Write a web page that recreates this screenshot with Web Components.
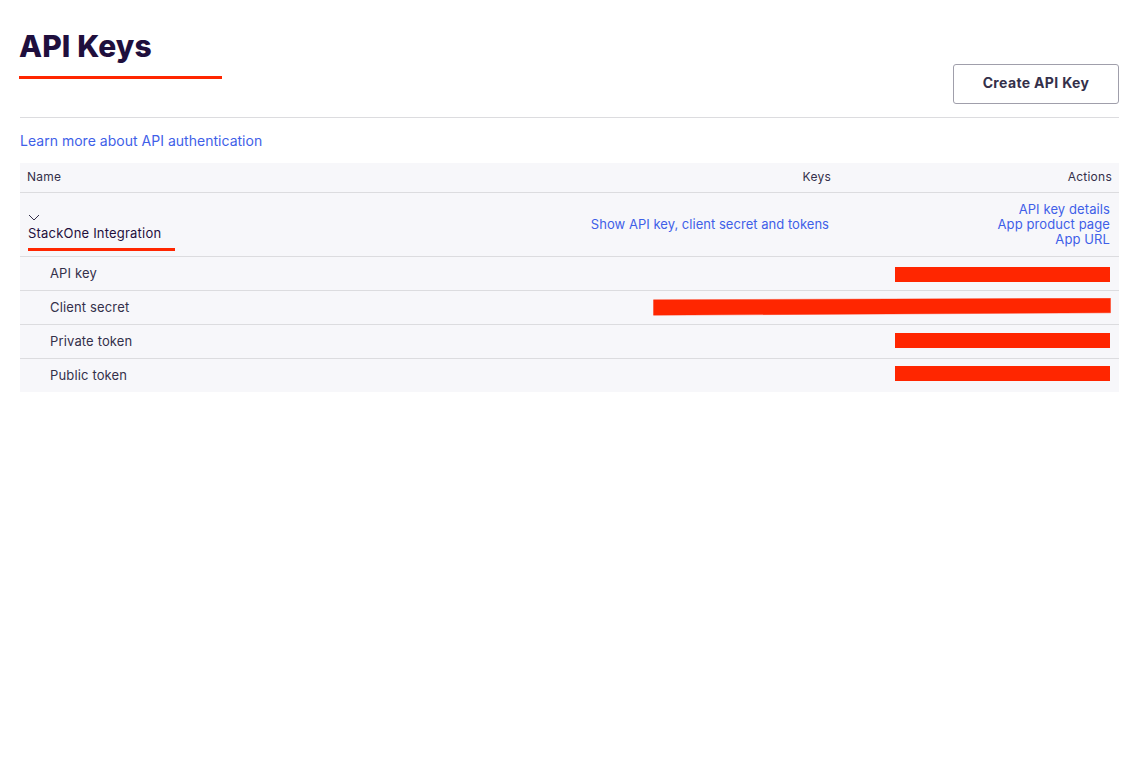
<!DOCTYPE html>
<html>
<head>
<meta charset="utf-8">
<title>API Keys</title>
<style>
  html, body { margin: 0; background: #fff; }
  body { font-family: Inter, "Liberation Sans", sans-serif; color: #1f0f3d; }
</style>
</head>
<body>
<keys-page>
  <page-header slot="header" title="API Keys" action="Create API Key"></page-header>
  <a-link slot="learn">Learn more about API authentication</a-link>
  <keys-table slot="table">
    <secret-row label="API key" nudge="2"></secret-row>
    <secret-row label="Client secret" wide></secret-row>
    <secret-row label="Private token" nudge="-2"></secret-row>
    <secret-row label="Public token" nudge="-4"></secret-row>
  </keys-table>
</keys-page>

<script>
class KeysPage extends HTMLElement {
    constructor() {
        super();
        this.attachShadow({mode: "open"}).innerHTML = `
        <style>
            :host {
                display: block;
                padding: 0 17px 0 20px;
            }
            .learn {
                --link-size: 14px;
                --link-spacing: 0.02px;
                display: block;
                padding-top: 14px;
                height: 31px;
                line-height: 17px;
            }
        </style>
        <slot name="header"></slot>
        <div class="learn"><slot name="learn"></slot></div>
        <slot name="table"></slot>
        `;
    }
}

class PageHeader extends HTMLElement {
    constructor() {
        super();
        this.attachShadow({mode: "open"});
    }

    connectedCallback() {
        this.shadowRoot.innerHTML = `
        <style>
            :host {
                display: flex;
                justify-content: space-between;
                align-items: flex-end;
                padding-bottom: 13px;
                height: 104px;
                border-bottom: 1px solid #dcdcdf;
            }
            .title {
                margin-left: -1px;
                width: 203px;
                height: 79px;
                box-sizing: border-box;
                border-bottom: 3px solid #ff2600;
                margin-bottom: 25px;
            }
            h1 {
                margin: 0;
                padding: 29px 0 0 0;
                font: 800 30px/34px Inter, "Liberation Sans", sans-serif;
                letter-spacing: 0.1px;
                color: #1f0f3d;
            }
            button {
                width: 166px;
                height: 40px;
                box-sizing: border-box;
                padding: 0 0 3px;
                background: #fff;
                border: 1px solid #a09fab;
                border-radius: 3px;
                font: 700 14px Inter, "Liberation Sans", sans-serif;
                letter-spacing: 0.35px;
                color: #34304a;
            }
        </style>
        <div class="title"><h1>${this.getAttribute("title")}</h1></div>
        <button>${this.getAttribute("action")}</button>
        `;
    }
}

class ALink extends HTMLElement {
    constructor() {
        super();
        this.attachShadow({mode: "open"}).innerHTML = `
        <style>
            :host {
                display: inline;
                color: #3f5fe8;
                font: 400 var(--link-size, 13px)/15px Inter, "Liberation Sans", sans-serif;
                letter-spacing: var(--link-spacing, 0.03px);
                cursor: pointer;
            }
        </style>
        <slot></slot>
        `;
    }
}

class KeysTable extends HTMLElement {
    constructor() {
        super();
        this.attachShadow({mode: "open"}).innerHTML = `
        <style>
            :host {
                display: block;
                background: #f7f7fa;
                font: 400 13px/15px Inter, "Liberation Sans", sans-serif;
                letter-spacing: 0.15px;
                color: #34304a;
            }
            .head {
                display: grid;
                grid-template-columns: 1fr 281px;
                align-items: center;
                height: 29px;
                padding: 0 7px;
                border-bottom: 1px solid #dcdcdf;
                font-size: 12px;
                letter-spacing: 0.25px;
            }
            .head span, .head .act { position: relative; top: -1px; }
            .head .keys { display: flex; justify-content: space-between; }
            .head .act { text-align: right; }
            .app {
                display: grid;
                grid-template-columns: 1fr auto 290px;
                align-items: center;
                height: 63px;
                border-bottom: 1px solid #dcdcdf;
            }
            .name {
                padding: 21px 0 0 8px;
                align-self: start;
            }
            .chev { display: block; width: 12px; height: 7px; }
            .title {
                width: 147px;
                margin-top: 5px;
                padding-bottom: 7px;
                border-bottom: 3px solid #ff2600;
                color: #1f0f3d;
                box-sizing: border-box;
                letter-spacing: 0.2px;
            }
            .actions {
                display: flex;
                flex-direction: column;
                align-items: flex-end;
                padding-right: 9px;
                --link-spacing: 0.1px;
            }
        </style>
        <div class="head">
            <div class="keys"><span>Name</span><span>Keys</span></div>
            <div class="act">Actions</div>
        </div>
        <div class="app">
            <div class="name">
                <svg class="chev" viewBox="0 0 12 7"><path d="M1 1l5 5 5-5" fill="none" stroke="#34304a" stroke-width="1"/></svg>
                <div class="title">StackOne Integration</div>
            </div>
            <a-link>Show API key, client secret and tokens</a-link>
            <div class="actions">
                <a-link>API key details</a-link>
                <a-link>App product page</a-link>
                <a-link>App URL</a-link>
            </div>
        </div>
        <slot></slot>
        `;
    }
}

class SecretRow extends HTMLElement {
    constructor() {
        super();
        this.attachShadow({mode: "open"});
    }

    connectedCallback() {
        const nudge = Number(this.getAttribute("nudge") || 0);
        const bar = this.hasAttribute("wide")
            ? `<svg width="458" height="18" viewBox="0 0 458 18"><polygon points="0.5,1.8 457.5,0.3 457.5,14.8 0.5,17.2" fill="#ff2600" stroke="#ff2600" stroke-opacity="0.4"/></svg>`
            : `<div class="bar" style="margin-top:${Math.max(nudge, 0)}px;margin-bottom:${Math.max(-nudge, 0)}px"></div>`;
        this.shadowRoot.innerHTML = `
        <style>
            :host {
                display: flex;
                justify-content: space-between;
                align-items: center;
                height: 33px;
                padding: 0 9px 0 30px;
                border-bottom: 1px solid #dcdcdf;
            }
            :host(:last-child) { border-bottom: 0; }
            .bar { width: 215px; height: 15px; background: #ff2600; }
            svg { display: block; margin: 0 -1px 2px 0; }
        </style>
        <span>${this.getAttribute("label")}</span>
        ${bar}
        `;
    }
}

customElements.define("keys-page", KeysPage);
customElements.define("page-header", PageHeader);
customElements.define("a-link", ALink);
customElements.define("keys-table", KeysTable);
customElements.define("secret-row", SecretRow);
</script>
</body>
</html>
